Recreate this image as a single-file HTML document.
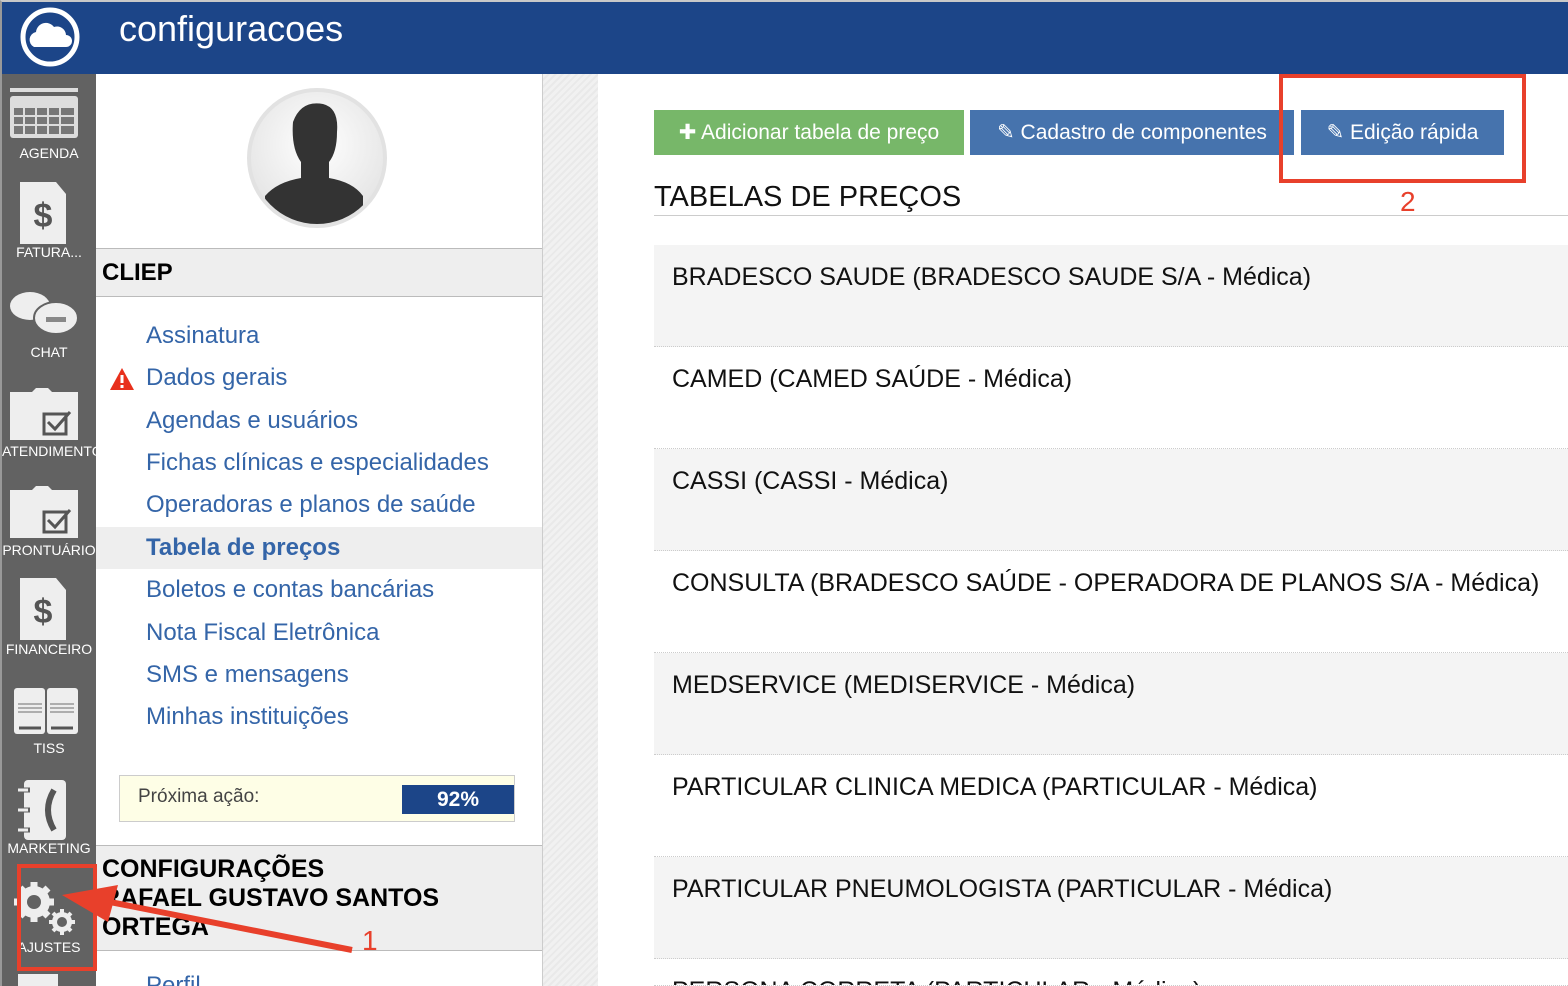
<!DOCTYPE html>
<html style="width:1568px;height:986px;overflow:hidden"><head><meta charset="utf-8"><style>
*{margin:0;padding:0;box-sizing:border-box}
body{width:1568px;height:986px;overflow:hidden;position:relative;background:#fff;font-family:"Liberation Sans",Arial,sans-serif}
.a{position:absolute}
#hdr{left:0;top:0;width:1568px;height:74px;background:#1c4588;border-top:2px solid #c8c8c8;border-left:2px solid #999}
#side{left:0;top:74px;width:96px;height:912px;background:#626262;border-left:2px solid #999;overflow:hidden}
.lbl{position:absolute;width:94px;left:0;text-align:center;color:#fff;font-size:14px;white-space:nowrap;overflow:hidden}
#panel{left:96px;top:74px;width:447px;height:912px;background:#fff;border-right:1px solid #ccc}
#stripe{left:543px;top:74px;width:55px;height:912px;background:repeating-linear-gradient(135deg,#f1f1f1 0 3px,#e9e9e9 3px 5px)}
.lnk{position:absolute;left:146px;color:#3465a8;font-size:24px;white-space:nowrap}
.btn{position:absolute;top:110px;height:45px;color:#fff;font-size:21px;line-height:45px;text-align:center;white-space:nowrap}
.row{position:absolute;left:654px;width:914px;height:102px;border-bottom:1px dotted #ccc;font-size:25px;color:#111;padding:18px 0 0 18px;white-space:nowrap;overflow:hidden}
.g{background:#f4f4f4}
</style></head><body>
<div id="hdr" class="a">
 <svg class="a" style="left:14px;top:2px" width="68" height="66" viewBox="0 0 68 66"><circle cx="34" cy="33" r="27" fill="none" stroke="#fff" stroke-width="5"/><path d="M18 43 a8 8 0 0 1 2-15 a10 10 0 0 1 18-5 a9 9 0 0 1 12 8 a6 6 0 0 1 0 12 z" fill="#fff"/></svg>
 <div class="a" style="left:117px;top:6px;color:#fff;font-size:36px">configuracoes</div>
</div>
<div id="side" class="a">
 <svg class="a" style="left:8px;top:14px" width="68" height="52"><rect x="0" y="0" width="68" height="4" fill="#ddd"/><rect x="0" y="8" width="68" height="42" rx="3" fill="#ddd"/><g fill="#777"><rect x="4" y="20" width="60" height="26"/></g><g stroke="#ddd" stroke-width="2"><path d="M4 28H64M4 37H64M14 12V48M26 12V48M38 12V48M50 12V48"/></g></svg>
 <div class="lbl" style="top:71px">AGENDA</div>
 <svg class="a" style="left:18px;top:108px" width="48" height="62"><path d="M0 0H36L46 12V62H0Z" fill="#eee"/><text x="23" y="45" font-size="34" font-weight="bold" fill="#555" text-anchor="middle" font-family="Liberation Sans">$</text></svg>
 <div class="lbl" style="top:170px">FATURA...</div>
 <svg class="a" style="left:6px;top:216px" width="74" height="50"><ellipse cx="22" cy="16" rx="20" ry="14" fill="#eee"/><ellipse cx="48" cy="28" rx="22" ry="16" fill="#eee" stroke="#626262" stroke-width="2"/><rect x="38" y="27" width="20" height="5" fill="#888"/></svg>
 <div class="lbl" style="top:270px">CHAT</div>
 <svg class="a" style="left:6px;top:312px" width="74" height="56"><path d="M2 6H24L28 2H40L44 6H70V54H2Z" fill="#eee"/><rect x="36" y="28" width="22" height="20" fill="none" stroke="#555" stroke-width="3"/><path d="M40 36L47 43L62 26" fill="none" stroke="#555" stroke-width="3"/></svg>
 <div class="lbl" style="top:369px">ATENDIMENTO</div>
 <svg class="a" style="left:6px;top:410px" width="74" height="56"><path d="M2 6H24L28 2H40L44 6H70V54H2Z" fill="#eee"/><rect x="36" y="28" width="22" height="20" fill="none" stroke="#555" stroke-width="3"/><path d="M40 36L47 43L62 26" fill="none" stroke="#555" stroke-width="3"/></svg>
 <div class="lbl" style="top:468px">PRONTUÁRIO</div>
 <svg class="a" style="left:18px;top:504px" width="48" height="62"><path d="M0 0H36L46 12V62H0Z" fill="#eee"/><text x="23" y="45" font-size="34" font-weight="bold" fill="#555" text-anchor="middle" font-family="Liberation Sans">$</text></svg>
 <div class="lbl" style="top:567px">FINANCEIRO</div>
 <svg class="a" style="left:12px;top:614px" width="64" height="48"><rect x="0" y="0" width="31" height="46" rx="3" fill="#eee"/><rect x="33" y="0" width="31" height="46" rx="3" fill="#eee"/><g stroke="#999" stroke-width="1.5"><path d="M4 16H28M4 20H28M4 24H28M36 16H60M36 20H60M36 24H60"/></g><path d="M5 40H27M37 40H59" stroke="#555" stroke-width="3"/></svg>
 <div class="lbl" style="top:666px">TISS</div>
 <svg class="a" style="left:16px;top:706px" width="52" height="60"><rect x="6" y="0" width="42" height="60" rx="4" fill="#eee"/><path d="M0 10H12M0 30H12M0 50H12" stroke="#626262" stroke-width="5"/><path d="M0 10H10M0 30H10M0 50H10" stroke="#eee" stroke-width="3"/><path d="M36 10 Q24 30 36 50" stroke="#555" stroke-width="6" fill="none"/></svg>
 <div class="lbl" style="top:766px">MARKETING</div>
 <svg class="a" style="left:6px;top:806px" width="72" height="60"><circle cx="26" cy="22" r="16" fill="#eee"/><g stroke="#eee" stroke-width="7"><path d="M26 2V42M6 22H46M12 8L40 36M40 8L12 36"/></g><circle cx="26" cy="22" r="7" fill="#626262"/><circle cx="54" cy="42" r="10" fill="#eee"/><g stroke="#eee" stroke-width="4"><path d="M54 29V55M41 42H67M45 33L63 51M63 33L45 51"/></g><circle cx="54" cy="42" r="5" fill="#626262"/></svg>
 <div class="lbl" style="top:865px">AJUSTES</div>
 <div class="a" style="left:16px;top:900px;width:40px;height:12px;background:#eee"></div>
</div>
<div id="panel" class="a">
 <div class="a" style="left:151px;top:14px;width:140px;height:140px;border-radius:50%;background:radial-gradient(circle at 50% 40%,#fff,#ddd);border:4px solid #e2e2e2;overflow:hidden">
  <svg width="132" height="132" viewBox="0 0 132 132"><path d="M42 30 Q50 8 72 12 Q88 16 86 40 Q86 60 78 70 L78 86 Q102 90 112 104 L112 132 L14 132 L14 104 Q26 90 50 86 L50 70 Q40 56 42 30Z" fill="#333"/></svg>
 </div>
 <div class="a" style="left:0;top:174px;width:446px;height:49px;background:#eee;border-top:1px solid #bbb;border-bottom:1px solid #bbb;font-weight:bold;font-size:24px;padding:10px 0 0 6px">CLIEP</div>
 <div class="a" style="left:0;top:453px;width:446px;height:42px;background:#eee"></div>
</div>
<div class="lnk" style="top:322px">Assinatura</div>
<svg class="a" style="left:109px;top:367px" width="26" height="24"><path d="M13 1L25 23H1Z" fill="#e8301c"/><rect x="11.5" y="8" width="3" height="8" fill="#fff"/><rect x="11.5" y="18" width="3" height="3" fill="#fff"/></svg>
<div class="lnk" style="top:364px">Dados gerais</div>
<div class="lnk" style="top:407px">Agendas e usuários</div>
<div class="lnk" style="top:449px">Fichas clínicas e especialidades</div>
<div class="lnk" style="top:491px">Operadoras e planos de saúde</div>
<div class="lnk" style="top:534px;font-weight:bold">Tabela de preços</div>
<div class="lnk" style="top:576px">Boletos e contas bancárias</div>
<div class="lnk" style="top:619px">Nota Fiscal Eletrônica</div>
<div class="lnk" style="top:661px">SMS e mensagens</div>
<div class="lnk" style="top:703px">Minhas instituições</div>
<div class="a" style="left:119px;top:775px;width:396px;height:47px;background:#fefee6;border:1px solid #ccc"></div>
<div class="a" style="left:138px;top:786px;font-size:19px;color:#444">Próxima ação:</div>
<div class="a" style="left:402px;top:785px;width:112px;height:29px;background:#1c4588;color:#fff;font-weight:bold;font-size:21px;text-align:center;line-height:29px">92%</div>
<div class="a" style="left:96px;top:845px;width:446px;height:106px;background:#eee;border-top:1px solid #bbb;border-bottom:1px solid #bbb;font-weight:bold;font-size:25px;line-height:29px;padding:9px 0 0 6px;white-space:nowrap">CONFIGURAÇÕES<br>RAFAEL GUSTAVO SANTOS<br>ORTEGA</div>
<div class="lnk" style="top:972px">Perfil</div>
<div id="stripe" class="a"></div>
<div class="btn" style="left:654px;width:310px;background:#77b769">✚ Adicionar tabela de preço</div>
<div class="btn" style="left:970px;width:324px;background:#4673ad">✎ Cadastro de componentes</div>
<div class="btn" style="left:1301px;width:203px;background:#4673ad">✎ Edição rápida</div>
<div class="a" style="left:654px;top:181px;font-size:29px;color:#111">TABELAS DE PREÇOS</div>
<div class="a" style="left:654px;top:215px;width:914px;height:1px;background:#ccc"></div>
<div class="row g" style="top:245px">BRADESCO SAUDE (BRADESCO SAUDE S/A - Médica)</div>
<div class="row" style="top:347px">CAMED (CAMED SAÚDE - Médica)</div>
<div class="row g" style="top:449px">CASSI (CASSI - Médica)</div>
<div class="row" style="top:551px">CONSULTA (BRADESCO SAÚDE - OPERADORA DE PLANOS S/A - Médica)</div>
<div class="row g" style="top:653px">MEDSERVICE (MEDISERVICE - Médica)</div>
<div class="row" style="top:755px">PARTICULAR CLINICA MEDICA (PARTICULAR - Médica)</div>
<div class="row g" style="top:857px">PARTICULAR PNEUMOLOGISTA (PARTICULAR - Médica)</div>
<div class="row" style="top:959px;height:27px">PERSONA CORRETA (PARTICULAR - Médica)</div>
<div class="a" style="left:1279px;top:74px;width:247px;height:109px;border:4px solid #e8402b"></div>
<div class="a" style="left:1400px;top:186px;color:#e8402b;font-size:28px">2</div>
<div class="a" style="left:17px;top:864px;width:80px;height:107px;border:4px solid #e8402b"></div>
<svg class="a" style="left:0;top:0" width="1568" height="986"><path d="M352 950 L110 902" stroke="#e8402b" stroke-width="6"/><path d="M62 895 L118 885 L108 922Z" fill="#e8402b"/></svg>
<div class="a" style="left:362px;top:925px;color:#e8402b;font-size:28px">1</div>
</body></html>
